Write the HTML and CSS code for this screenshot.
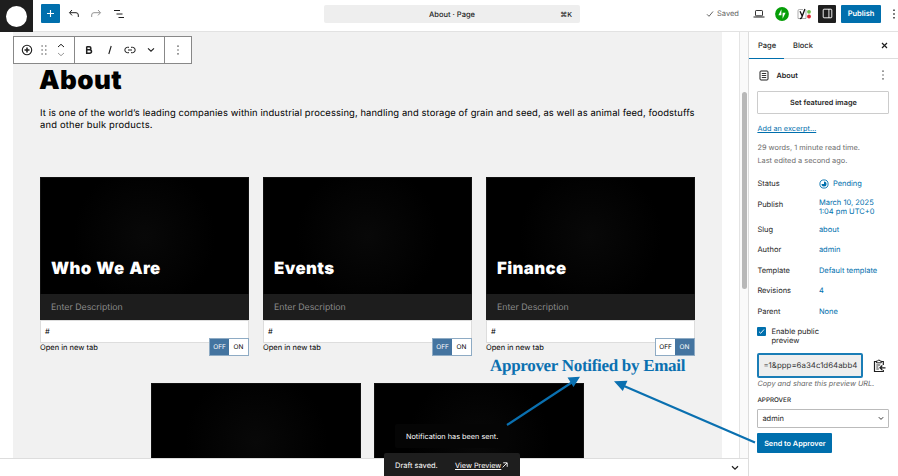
FILE: index.html
```
<!DOCTYPE html>
<html lang="en">
<head>
    <meta charset="UTF-8">
    <meta name="viewport" content="width=device-width, initial-scale=1.0">
    <title>About - Page Editor</title>
    <link rel="stylesheet" href="styles.css">
</head>
<body>
    <header class="topbar">
        <div class="site-logo"><span></span></div>
        <div class="tools">
            <button class="add-block"><svg width="9" height="9" viewBox="0 0 9 9"><path d="M4.5 1v7M1 4.5h7" stroke="#fff" stroke-width="1.1"/></svg></button>
            <svg class="undo" width="12" height="10" viewBox="0 0 12 10"><path d="M4 1 1.5 3.7 4 6.4M1.8 3.7H8q2.3 0 2.3 2.3v2" fill="none" stroke="#1e1e1e"/></svg>
            <svg class="redo" width="12" height="10" viewBox="0 0 12 10"><path d="M8 1l2.5 2.7L8 6.4M10.2 3.7H4Q1.7 3.7 1.7 6v2" fill="none" stroke="#949494"/></svg>
            <svg class="outline" width="12" height="10" viewBox="0 0 12 10"><path d="M1 1.5h6M3.5 5h6M5.5 8.5h5.5" stroke="#1e1e1e" stroke-width="1.1"/></svg>
        </div>
        <div class="command">
            <span class="command-title">About · Page</span>
            <span class="command-key">⌘K</span>
        </div>
        <div class="actions">
            <svg class="check" width="8" height="8" viewBox="0 0 8 8"><path d="M1 4.3 3 6.3 7 1.5" fill="none" stroke="#555" stroke-width="0.9"/></svg>
            <span class="saved">Saved</span>
            <svg class="laptop" width="12" height="10" viewBox="0 0 12 10"><rect x="2.5" y="1.5" width="7" height="5.3" rx="0.7" fill="none" stroke="#1e1e1e" stroke-width="0.9"/><path d="M0.5 8h11" stroke="#1e1e1e"/></svg>
            <svg class="jetpack" width="14" height="14" viewBox="0 0 14 14"><circle cx="7" cy="7" r="6.9" fill="#069e08"/><path d="M6.4 2.3v6H3.4zM7.6 11.7V5.7h3z" fill="#fff"/></svg>
            <svg class="yoast" width="15" height="12" viewBox="0 0 15 12"><path d="M6 1.5H2.3Q1 1.5 1 2.8V10.5H9V2" fill="none" stroke="#777" stroke-width="0.6"/><path d="M3 3.3 5.1 7.8M7.9 1 4.7 9.4Q4.2 10.6 2.9 10.6" fill="none" stroke="#111" stroke-width="1.3"/><circle cx="12" cy="3.8" r="1.9" fill="#6cc04a"/><circle cx="12" cy="8.5" r="1.9" fill="#dc2430"/></svg>
            <button class="sidebar-toggle"><svg width="11" height="11" viewBox="0 0 11 11"><rect x="1.2" y="1.2" width="8.6" height="8.6" rx="0.8" fill="none" stroke="#fff" stroke-width="0.9"/><path d="M6.9 1v9" stroke="#fff" stroke-width="0.9"/></svg></button>
            <button class="publish">Publish</button>
            <svg class="dots" width="4" height="10" viewBox="0 0 4 10"><path d="M1.3 0.5h1.4v1.4H1.3zM1.3 4.3h1.4v1.4H1.3zM1.3 8.1h1.4v1.4H1.3z" fill="#1e1e1e"/></svg>
        </div>
    </header>

    <main class="editor">
        <section class="canvas">
            <div class="page-content">
                <h1>About</h1>
                <p class="intro">It is one of the world’s leading companies within industrial processing, handling and storage of grain and seed, as well as animal feed, foodstuffs<br><span class="line-two">and other bulk products.</span></p>
                <div class="cards">
                    <div class="card">
                        <div class="card-image"><h2>Who We Are</h2></div>
                        <div class="card-desc">Enter Description</div>
                        <div class="card-link">#</div>
                        <div class="card-option"><span>Open in new tab</span><div class="switch"><b class="active">OFF</b><b>ON</b></div></div>
                    </div>
                    <div class="card">
                        <div class="card-image"><h2>Events</h2></div>
                        <div class="card-desc">Enter Description</div>
                        <div class="card-link">#</div>
                        <div class="card-option"><span>Open in new tab</span><div class="switch"><b class="active">OFF</b><b>ON</b></div></div>
                    </div>
                    <div class="card">
                        <div class="card-image"><h2>Finance</h2></div>
                        <div class="card-desc">Enter Description</div>
                        <div class="card-link">#</div>
                        <div class="card-option"><span>Open in new tab</span><div class="switch"><b>OFF</b><b class="active">ON</b></div></div>
                    </div>
                </div>
                <div class="cards second-row">
                    <div class="card-image"></div>
                    <div class="card-image"></div>
                </div>
            </div>
            <div class="scrollbar"><div class="thumb"></div></div>
        </section>
        <div class="meta-bar"><svg width="8" height="6" viewBox="0 0 8 6"><path d="M1 1.3 4 4.2 7 1.3" fill="none" stroke="#1e1e1e" stroke-width="1.2"/></svg></div>

        <div class="block-toolbar">
            <div class="group block-group">
                <svg width="12" height="12" viewBox="0 0 12 12"><circle cx="6" cy="6" r="4.7" fill="none" stroke="#1e1e1e" stroke-width="1.1"/><path d="M6 3.5v5M3.5 6h5" stroke="#1e1e1e" stroke-width="1.5"/></svg>
                <svg width="6" height="10" viewBox="0 0 6 10"><path d="M0.5 1h1.2M0.5 5h1.2M0.5 9h1.2M4.2 1h1.2M4.2 5h1.2M4.2 9h1.2" stroke="#1e1e1e" stroke-width="1.2"/></svg>
                <svg width="8" height="14" viewBox="0 0 8 14"><path d="M1 4 4 1.3 7 4" fill="none" stroke="#1e1e1e"/><path d="M1 10 4 12.7 7 10" fill="none" stroke="#999"/></svg>
            </div>
            <div class="group format-group">
                <svg width="8" height="10" viewBox="0 0 8 10"><path d="M1.7 1.8h2.6q1.6 0 1.6 1.5t-1.6 1.5H1.7M4.5 4.8q2 0 2 1.7T4.5 8.2H1.7V1.5" fill="none" stroke="#1e1e1e" stroke-width="1.5"/></svg>
                <svg width="6" height="10" viewBox="0 0 6 10"><path d="M4.2 1 1.8 9" stroke="#1e1e1e" stroke-width="1.1"/></svg>
                <svg width="12" height="8" viewBox="0 0 12 8"><path d="M5 1.3H3.5a2.7 2.7 0 0 0 0 5.4H5M7 1.3h1.5a2.7 2.7 0 0 1 0 5.4H7M4 4h4" fill="none" stroke="#1e1e1e"/></svg>
                <svg width="8" height="6" viewBox="0 0 8 6"><path d="M1 1.3 4 4.2 7 1.3" fill="none" stroke="#1e1e1e" stroke-width="1.1"/></svg>
            </div>
            <div class="group more-group">
                <svg width="4" height="10" viewBox="0 0 4 10"><path d="M1.4 0.6h1.2v1.2H1.4zM1.4 4.4h1.2v1.2H1.4zM1.4 8.2h1.2v1.2H1.4z" fill="#1e1e1e"/></svg>
            </div>
        </div>
        <div class="snackbar notice">Notification has been sent.</div>
        <div class="snackbar draft"><span>Draft saved.</span><a>View Preview</a><svg width="6" height="6" viewBox="0 0 6 6"><path d="M0.6 5.4 5 1M1.2 0.8h4v4" fill="none" stroke="#fff" stroke-width="0.9"/></svg></div>
    </main>

    <aside class="sidebar">
        <nav class="tabs">
            <span class="tab selected">Page</span>
            <span class="tab">Block</span>
            <svg width="7" height="7" viewBox="0 0 7 7"><path d="M1 1l5 5M6 1 1 6" stroke="#1e1e1e" stroke-width="1.2"/></svg>
        </nav>
        <div class="panel">
            <div class="page-name">
                <svg width="10" height="11" viewBox="0 0 10 11"><rect x="1" y="1" width="8" height="9" rx="1" fill="none" stroke="#1e1e1e"/><path d="M2.8 3.5h4.4M2.8 5.5h4.4M2.8 7.5h4.4" stroke="#1e1e1e" stroke-width="0.9"/></svg>
                <strong>About</strong>
                <svg class="dots" width="4" height="10" viewBox="0 0 4 10"><path d="M1.4 0.6h1.2v1.2H1.4zM1.4 4.4h1.2v1.2H1.4zM1.4 8.2h1.2v1.2H1.4z" fill="#1e1e1e"/></svg>
            </div>
            <button class="featured">Set featured image</button>
            <a class="excerpt">Add an excerpt…</a>
            <p class="stats">29 words, 1 minute read time.<br>Last edited a second ago.</p>
            <dl class="summary">
                <dt>Status</dt><dd class="status"><svg width="10" height="10" viewBox="0 0 10 10"><circle cx="5" cy="5" r="4.1" fill="none" stroke="#006fad" stroke-width="0.9"/><path d="M5 5V2.5A2.5 2.5 0 1 1 2.5 5z" fill="#006fad"/></svg>Pending</dd>
                <dt>Publish</dt><dd class="date">March 10, 2025<br>1:04 pm UTC+0</dd>
                <dt>Slug</dt><dd>about</dd>
                <dt>Author</dt><dd>admin</dd>
                <dt>Template</dt><dd>Default template</dd>
                <dt>Revisions</dt><dd>4</dd>
                <dt>Parent</dt><dd>None</dd>
            </dl>
            <div class="preview-check">
                <span class="checkbox"><svg width="7" height="7" viewBox="0 0 7 7"><path d="M1 3.7 2.7 5.3 6 1.5" fill="none" stroke="#fff" stroke-width="0.9"/></svg></span>
                <span>Enable public<br>preview</span>
            </div>
            <div class="preview-url">
                <div class="url-field">=1&amp;ppp=6a34c1d64abb4</div>
                <svg width="13" height="14" viewBox="0 0 13 14"><path d="M10.3 6V2.5H1.5V12.5H10.3V11" fill="none" stroke="#1e1e1e" stroke-width="1.2"/><path d="M3.5 3.8V2h1.2Q5.9-0.5 7.1 2h1.2v1.8z" fill="#fff" stroke="#1e1e1e"/><path d="M3.3 6h4M3.3 8h2M3.3 10h2.5" stroke="#1e1e1e" stroke-width="0.9"/><path d="M12.5 8.8H7.5M9.3 6.5 7 8.8l2.3 2.3" fill="none" stroke="#1e1e1e" stroke-width="1.3"/></svg>
            </div>
            <p class="help">Copy and share this preview URL.</p>
            <label class="approver">APPROVER</label>
            <div class="select"><span>admin</span><svg width="6" height="5" viewBox="0 0 6 5"><path d="M0.8 1.2 3 3.4 5.2 1.2" fill="none" stroke="#1e1e1e" stroke-width="0.9"/></svg></div>
            <button class="send">Send to Approver</button>
        </div>
    </aside>

    <!-- callout drawn over the editor -->
    <div class="callout">Approver Notified by Email</div>
    <svg class="arrows" width="898" height="476" viewBox="0 0 898 476">
        <path d="M507 425 574 381M755 442.5 624 386" stroke="#0a70b0" stroke-width="2.2"/>
        <path d="M580 376.8 567.5 377.5 573.5 387zM614 381.3 627.5 380.8 622.8 391z" fill="#0a70b0"/>
    </svg>
</body>
</html>
```
FILE: styles.css
```
* {
    box-sizing: border-box;
}
body {
    margin: 0;
    width: 898px;
    height: 476px;
    overflow: hidden;
    position: relative;
    display: grid;
    grid-template-columns: 748px 150px;
    grid-template-rows: 32px 444px;
    background: #fff;
    color: #1e1e1e;
    font-family: Inter, sans-serif;
    font-size: 7.5px;
    text-rendering: geometricPrecision;
}
svg {
    display: block;
    flex: none;
}
h1, h2, p, dl, dd {
    margin: 0;
}
button {
    border: 0;
    padding: 0;
    font: 600 7.5px Inter, sans-serif;
    text-rendering: inherit;
    display: flex;
    align-items: center;
    justify-content: center;
}
.topbar {
    grid-column: 1 / 3;
    display: flex;
    height: 32px;
    border-bottom: 1px solid #e2e2e2;
}
.site-logo {
    width: 33px;
    height: 32px;
    background: #1e1e1e;
    padding: 6px;
}
.site-logo span {
    display: block;
    width: 21px;
    height: 21px;
    border-radius: 50%;
    background: #fff;
}
.tools {
    display: flex;
    align-items: center;
    width: 291px;
    height: 27px;
    padding-left: 8px;
}
.add-block {
    width: 19px;
    height: 19px;
    border-radius: 1px;
    background: #006fad;
}
.undo {
    margin-left: 8px;
}
.redo {
    margin-left: 10px;
}
.outline {
    margin-left: 11px;
}
.command {
    width: 256px;
    height: 18px;
    margin-top: 5px;
    border-radius: 2px;
    background: #eee;
    display: grid;
    grid-template-columns: 1fr auto 1fr;
    align-items: center;
    font-weight: 500;
}
.command-title {
    grid-column: 2;
}
.command-key {
    justify-self: end;
    padding-right: 8px;
    font-size: 7px;
}
.actions {
    display: flex;
    align-items: center;
    height: 27px;
    margin-left: 126px;
}
.saved {
    color: #666;
    width: 22px;
    margin-left: 3px;
}
.laptop {
    margin-left: 14px;
}
.jetpack {
    margin-left: 10px;
}
.yoast {
    margin-left: 8px;
}
.sidebar-toggle {
    width: 18px;
    height: 18px;
    margin-left: 6px;
    border-radius: 1px;
    background: #1e1e1e;
}
.publish {
    width: 40px;
    height: 18px;
    margin-left: 5px;
    border-radius: 1px;
    background: #006fad;
    color: #fff;
}
.actions .dots {
    margin-left: 11px;
}
.editor {
    position: relative;
    display: flex;
    flex-direction: column;
}
.canvas {
    display: flex;
    height: 427px;
    overflow: hidden;
    padding-left: 13px;
    border-bottom: 1px solid #ddd;
}
.page-content {
    width: 709px;
    padding: 33px 0 0 27px;
    background: #f1f1f1;
    color: #000;
}
.page-content h1 {
    height: 31px;
    margin-left: -1px;
    font-size: 26px;
    line-height: 32px;
    font-weight: 900;
    letter-spacing: 0.4px;
}
.intro {
    height: 68px;
    margin-top: 11px;
    padding-top: 0.6px;
    font-size: 9.4px;
    line-height: 12.5px;
    letter-spacing: 0.105px;
    white-space: nowrap;
}
.line-two {
    letter-spacing: 0.18px;
}
.cards {
    display: grid;
    grid-template-columns: repeat(3, 209px);
    gap: 14px;
    margin-top: 2px;
}
.card-image {
    height: 117px;
    display: flex;
    align-items: flex-end;
    padding: 0 10px 15px;
    border: 1px solid #111;
    border-bottom: 0;
    background: radial-gradient(circle, #080808, #000 60%);
}
.card-image h2 {
    color: #fff;
    font-size: 16.8px;
    line-height: 20px;
    font-weight: 900;
    letter-spacing: 0.4px;
    word-spacing: 0.8px;
}
.card-desc {
    height: 26px;
    padding-left: 11px;
    background: #1d1d1d;
    color: #8a8a8a;
    font-size: 8.8px;
    line-height: 27px;
}
.card-link {
    height: 23px;
    padding-left: 4px;
    border: 1px solid #ddd;
    background: #fff;
    line-height: 21px;
}
.card-option {
    display: flex;
    justify-content: space-between;
    height: 14px;
    line-height: 9px;
}
.switch {
    display: flex;
    width: 40px;
    height: 18px;
    margin-top: -5px;
    border: 1px solid #8eabc4;
    background: #fff;
}
.switch b {
    flex: 1;
    font-size: 6.5px;
    font-weight: 400;
    line-height: 17px;
    text-align: center;
}
.switch .active {
    background: #4474a0;
    color: #fff;
}
.second-row {
    grid-template-columns: repeat(2, 210px);
    gap: 13px;
    margin: 26px 0 0 111px;
}
.scrollbar {
    width: 9px;
    margin-left: 17px;
    border-left: 1px solid #e4e4e4;
    background: #fafafa;
    padding: 60px 1.5px 0;
}
.thumb {
    width: 5px;
    height: 197px;
    border-radius: 3px;
    background: #b8b8b8;
}
.meta-bar {
    height: 17px;
    display: flex;
    align-items: center;
    justify-content: flex-end;
    padding: 1px 9px 0 0;
}
.block-toolbar {
    position: absolute;
    left: 13px;
    top: 4px;
    display: flex;
    width: 179px;
    height: 28px;
    border: 1px solid #888;
    background: #fff;
}
.group {
    display: flex;
    align-items: center;
    border-right: 1px solid #888;
}
.block-group {
    width: 61px;
    padding-left: 7px;
    gap: 8px;
}
.block-group svg:last-child {
    margin-left: 2px;
}
.format-group {
    width: 90px;
    padding-left: 10px;
    gap: 11px;
}
.format-group svg:nth-child(2) {
    margin-left: 3px;
}
.more-group {
    flex: 1;
    justify-content: center;
    border: 0;
}
.snackbar {
    position: absolute;
    display: flex;
    align-items: center;
    color: #fff;
    background: #1e1e1e;
}
.notice {
    left: 395px;
    top: 392px;
    height: 24px;
    width: 114px;
    padding-left: 11px;
    border-radius: 2px;
    background: #050505;
    font-size: 7.3px;
}
.draft {
    left: 384px;
    top: 421px;
    width: 136px;
    height: 24px;
    padding-left: 11px;
    border-radius: 2px 2px 0 0;
}
.draft span {
    width: 60px;
}
.draft a {
    font-size: 7.3px;
    text-decoration: underline;
    margin-right: 1px;
}
.sidebar {
    border-left: 1px solid #ddd;
    background: #fff;
}
.tabs {
    display: flex;
    align-items: center;
    height: 27px;
    border-bottom: 1px solid #ddd;
    font-weight: 500;
}
.tab {
    height: 27px;
    line-height: 27px;
    padding: 0 9px;
}
.tab.selected {
    width: 35px;
    border-bottom: 1px solid #006fad;
}
.tabs svg {
    margin-left: auto;
    margin-right: 10px;
}
.panel {
    padding: 0 9px 0 8.4px;
}
.page-name {
    display: flex;
    align-items: center;
    height: 32px;
    padding-left: 2px;
}
.page-name strong {
    margin-left: 7px;
    font-size: 7.3px;
    font-weight: 600;
}
.page-name .dots {
    margin-left: auto;
    margin-right: 4px;
}
.featured {
    width: 132px;
    height: 23px;
    border: 1px solid #ccc;
    border-radius: 1px;
    background: #fff;
    color: #1e1e1e;
    font-size: 7.3px;
}
.excerpt {
    display: block;
    height: 28px;
    line-height: 29px;
    color: #006fad;
    font-size: 7.3px;
    text-decoration: underline;
}
.stats {
    height: 32px;
    color: #6c6c6c;
    font-size: 7.4px;
    line-height: 12.5px;
}
.summary {
    display: grid;
    grid-template-columns: 61.5px 1fr;
    grid-template-rows: 20.5px 25px repeat(5, 20.5px);
    line-height: 20.5px;
    white-space: nowrap;
}
.summary dd {
    color: #006fad;
}
.status {
    display: flex;
    align-items: center;
    gap: 4px;
}
.summary .date {
    padding-top: 3.5px;
    line-height: 9px;
}
.preview-check {
    display: flex;
    gap: 5px;
    height: 31px;
    padding-top: 5px;
    line-height: 9px;
}
.checkbox {
    width: 9px;
    height: 9px;
    padding: 1px;
    border-radius: 1px;
    background: #006fad;
}
.preview-url {
    display: flex;
    align-items: center;
    gap: 10px;
    height: 25px;
}
.url-field {
    width: 106px;
    height: 25px;
    padding-left: 4px;
    border: 2px solid #1a7db6;
    border-radius: 2px;
    background: #eee;
    color: #333;
    font-size: 7.9px;
    line-height: 21px;
    overflow: hidden;
    white-space: nowrap;
}
.help {
    height: 17px;
    color: #666;
    font-size: 7.3px;
    font-style: italic;
    line-height: 11px;
    white-space: nowrap;
}
.approver {
    display: block;
    height: 14px;
    font-size: 6.3px;
    font-weight: 500;
    line-height: 11px;
}
.select {
    display: flex;
    align-items: center;
    justify-content: space-between;
    width: 132px;
    height: 19px;
    padding: 0 4px;
    border: 1px solid #bbb;
    border-radius: 1px;
}
.send {
    width: 75px;
    height: 20px;
    margin-top: 5px;
    border-radius: 1px;
    background: #006fad;
    color: #fff;
    font-size: 7.3px;
}
.callout {
    position: absolute;
    left: 490px;
    top: 356px;
    color: #0a70b0;
    font: bold 17px/20px "Liberation Serif", serif;
    letter-spacing: -0.3px;
    white-space: nowrap;
}
.arrows {
    position: absolute;
    left: 0;
    top: 0;
}
```
